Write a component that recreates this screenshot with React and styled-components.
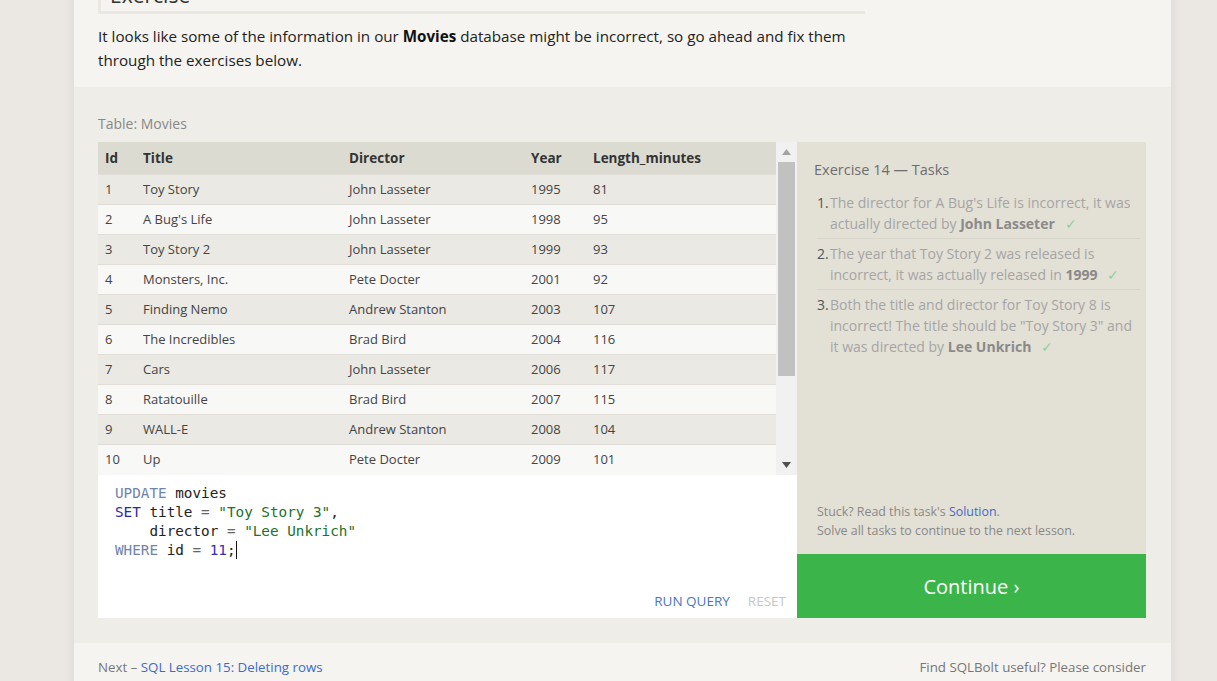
import React from 'react';
import styled, { createGlobalStyle } from 'styled-components';

const GlobalStyle = createGlobalStyle`
  html, body {
    margin: 0;
    padding: 0;
    background: #ebe8e4;
    font-family: "Open Sans", "Noto Sans", sans-serif;
    overflow: hidden;
  }
`;

const Page = styled.div`
  width: 1097px;
  margin: -29px 0 0 74px;
  background: #f5f4f0;
  box-shadow: 0 0 12px rgba(0, 0, 0, 0.07);
`;

const Intro = styled.div`
  padding: 0 24px 15px;
  max-width: 767px;
`;

const Heading = styled.h3`
  margin: 0;
  padding: 10px 9px 2px;
  font-size: 21px;
  line-height: 28px;
  font-weight: 400;
  color: #333;
  border-left: 3px solid #eae8e1;
  border-bottom: 3px solid #eae8e1;
`;

const Lead = styled.p`
  margin: 10px 0 0;
  font-size: 15.2px;
  line-height: 24px;
  color: #222;

  b { font-weight: 700; color: #111; }
`;

const ExerciseArea = styled.div`
  background: #efede7;
  padding: 27px 25px 25px 24px;
`;

const TableLabel = styled.div`
  font-size: 14px;
  line-height: 20px;
  color: #888;
  margin-bottom: 8px;
`;

const Workspace = styled.div`
  display: grid;
  grid-template-columns: 699px 349px;
`;

const LeftColumn = styled.div`
  display: flex;
  flex-direction: column;
`;

const TableFrame = styled.div`
  display: flex;
  height: 333px;
  background: #f8f8f7;
`;

const TableScroll = styled.div`
  flex: 1;
  overflow: hidden;
`;

const Table = styled.table`
  width: 100%;
  border-collapse: collapse;
  font-size: 13px;
  color: #444;
`;

const HeadCell = styled.th`
  height: 32px;
  padding: 0 0 0 7px;
  text-align: left;
  font-weight: 700;
  font-size: 13.5px;
  color: #333;
  background: #dcdbd2;
  width: ${(p) => p.$w || 'auto'};
`;

const Row = styled.tr`
  height: 30px;
  background: ${(p) => (p.$odd ? '#eae9e3' : '#f8f8f7')};
  border-top: 1px solid #e0ded7;
`;

const Cell = styled.td`
  padding: 0 0 1px 7px;
  white-space: nowrap;
`;

const Scrollbar = styled.div`
  width: 21px;
  background: #f1f1f1;
  display: flex;
  flex-direction: column;
  align-items: center;
`;

const ScrollArrow = styled.div`
  height: 20px;
  display: flex;
  align-items: center;
  justify-content: center;
  flex: none;
`;

const ScrollTrack = styled.div`
  flex: 1;
  width: 100%;
  display: flex;
  justify-content: center;
`;

const ScrollThumb = styled.div`
  width: 17px;
  height: 214px;
  background: #c1c1c1;
`;

const Editor = styled.div`
  height: 143px;
  background: #fff;
  display: flex;
  flex-direction: column;
  box-sizing: border-box;
`;

const Code = styled.pre`
  flex: 1;
  margin: 0;
  padding: 9px 0 0 17px;
  font-family: "DejaVu Sans Mono", "Liberation Mono", monospace;
  font-size: 14.3px;
  line-height: 19px;
  color: #222;
`;

const Tok = styled.span`
  color: ${(p) =>
    ({ kw: '#7083aa', set: '#2a2aa8', str: '#22702c', num: '#3232b0', op: '#666' }[p.$t] || '#222')};
`;

const Caret = styled.span`
  display: inline-block;
  width: 1px;
  height: 18px;
  background: #111;
  vertical-align: -4px;
`;

const Actions = styled.div`
  display: flex;
  justify-content: flex-end;
  gap: 18px;
  padding: 0 11px 8px 0;
`;

const ActionButton = styled.span`
  font-size: 13.5px;
  line-height: 18px;
  color: ${(p) => (p.$muted ? '#c6c6c6' : '#4a74c4')};
  text-transform: uppercase;
`;

const RightColumn = styled.div`
  display: flex;
  flex-direction: column;
`;

const TaskPanel = styled.div`
  flex: 1;
  background: #e3e0d5;
  padding: 17px 6px 14px 17px;
  display: flex;
  flex-direction: column;
`;

const TaskTitle = styled.div`
  font-size: 14.5px;
  line-height: 22px;
  color: #6e6e6e;
  margin-bottom: 7px;
`;

const TaskList = styled.ol`
  margin: 0;
  padding: 0 0 0 3px;
  list-style: none;
`;

const TaskItem = styled.li`
  display: flex;
  padding: 4px 0;
  border-bottom: ${(p) => (p.$last ? 'none' : '1px solid #d8d5ca')};
`;

const TaskNumber = styled.span`
  width: 13px;
  flex: none;
  font-size: 14px;
  line-height: 21px;
  color: #555;
`;

const TaskText = styled.span`
  font-size: 14px;
  line-height: 21px;
  color: #a5a5a5;

  b { color: #8a8a8a; font-weight: 700; }
`;

const Check = styled.span`
  color: #8fd19a;
  margin-left: 10px;
`;

const PanelFooter = styled.div`
  margin-top: auto;
  padding-left: 3px;
  font-size: 12.4px;
  line-height: 19px;
  color: #888;
`;

const Link = styled.a`
  color: #3d6bc7;
  text-decoration: none;
`;

const ContinueButton = styled.div`
  height: 64px;
  background: #3bb54a;
  color: #fff;
  font-size: 20px;
  display: flex;
  align-items: center;
  justify-content: center;
`;

const Footer = styled.div`
  display: flex;
  justify-content: space-between;
  padding: 14px 25px 30px 24px;
  font-size: 13.3px;
  line-height: 20px;
  color: #777;
`;

const movies = [
  [1, 'Toy Story', 'John Lasseter', 1995, 81],
  [2, "A Bug's Life", 'John Lasseter', 1998, 95],
  [3, 'Toy Story 2', 'John Lasseter', 1999, 93],
  [4, 'Monsters, Inc.', 'Pete Docter', 2001, 92],
  [5, 'Finding Nemo', 'Andrew Stanton', 2003, 107],
  [6, 'The Incredibles', 'Brad Bird', 2004, 116],
  [7, 'Cars', 'John Lasseter', 2006, 117],
  [8, 'Ratatouille', 'Brad Bird', 2007, 115],
  [9, 'WALL-E', 'Andrew Stanton', 2008, 104],
  [10, 'Up', 'Pete Docter', 2009, 101],
];

const tasks = [
  <>The director for A Bug's Life is incorrect, it was actually directed by <b>John Lasseter</b></>,
  <>The year that Toy Story 2 was released is incorrect, it was actually released in <b>1999</b></>,
  <>Both the title and director for Toy Story 8 is incorrect! The title should be "Toy Story 3" and it was directed by <b>Lee Unkrich</b></>,
];

const Triangle = ({ up, color }) => (
  <svg width="9" height="6" viewBox="0 0 9 6">
    <path d={up ? 'M0 6 L4.5 0 L9 6 Z' : 'M0 0 L9 0 L4.5 6 Z'} fill={color} />
  </svg>
);

export default function App() {
  return (
    <>
      <GlobalStyle />
      <Page>
        <Intro>
          <Heading>Exercise</Heading>
          <Lead>
            It looks like some of the information in our <b>Movies</b> database might be incorrect, so go ahead and fix them
            through the exercises below.
          </Lead>
        </Intro>

        <ExerciseArea>
          <TableLabel>Table: Movies</TableLabel>
          <Workspace>
            <LeftColumn>
              <TableFrame>
                <TableScroll>
                  <Table>
                    <thead>
                      <tr>
                        <HeadCell $w="31px">Id</HeadCell>
                        <HeadCell $w="199px">Title</HeadCell>
                        <HeadCell $w="175px">Director</HeadCell>
                        <HeadCell $w="55px">Year</HeadCell>
                        <HeadCell>Length_minutes</HeadCell>
                      </tr>
                    </thead>
                    <tbody>
                      {movies.map((m, i) => (
                        <Row key={m[0]} $odd={i % 2 === 0}>
                          {m.map((v, j) => (
                            <Cell key={j}>{v}</Cell>
                          ))}
                        </Row>
                      ))}
                    </tbody>
                  </Table>
                </TableScroll>
                <Scrollbar>
                  <ScrollArrow><Triangle up color="#a3a3a3" /></ScrollArrow>
                  <ScrollTrack><ScrollThumb /></ScrollTrack>
                  <ScrollArrow><Triangle color="#505050" /></ScrollArrow>
                </Scrollbar>
              </TableFrame>

              <Editor>
                <Code>
                  <Tok $t="kw">UPDATE</Tok> movies{'\n'}
                  <Tok $t="set">SET</Tok> title <Tok $t="op">=</Tok> <Tok $t="str">"Toy Story 3"</Tok>,{'\n'}
                  {'    '}director <Tok $t="op">=</Tok> <Tok $t="str">"Lee Unkrich"</Tok>{'\n'}
                  <Tok $t="kw">WHERE</Tok> id <Tok $t="op">=</Tok> <Tok $t="num">11</Tok>;<Caret />
                </Code>
                <Actions>
                  <ActionButton>Run query</ActionButton>
                  <ActionButton $muted>Reset</ActionButton>
                </Actions>
              </Editor>
            </LeftColumn>

            <RightColumn>
              <TaskPanel>
                <TaskTitle>Exercise 14 — Tasks</TaskTitle>
                <TaskList>
                  {tasks.map((t, i) => (
                    <TaskItem key={i} $last={i === tasks.length - 1}>
                      <TaskNumber>{i + 1}.</TaskNumber>
                      <TaskText>
                        {t}
                        <Check>✓</Check>
                      </TaskText>
                    </TaskItem>
                  ))}
                </TaskList>
                <PanelFooter>
                  Stuck? Read this task's <Link href="#">Solution</Link>.
                  <br />
                  Solve all tasks to continue to the next lesson.
                </PanelFooter>
              </TaskPanel>
              <ContinueButton>Continue ›</ContinueButton>
            </RightColumn>
          </Workspace>
        </ExerciseArea>

        <Footer>
          <span>
            Next – <Link href="#">SQL Lesson 15: Deleting rows</Link>
          </span>
          <span>Find SQLBolt useful? Please consider</span>
        </Footer>
      </Page>
    </>
  );
}
